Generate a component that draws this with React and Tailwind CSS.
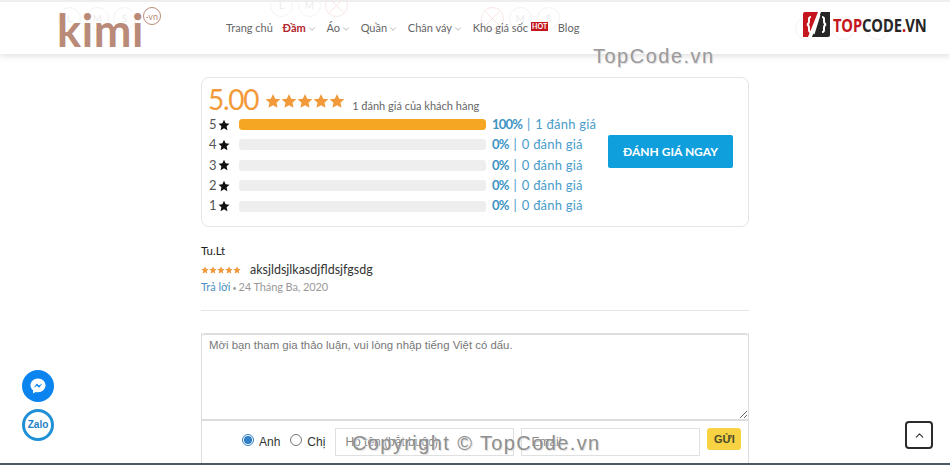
import { ChevronDown, ChevronUp } from 'lucide-react';

const FONT = "font-['Lato','Noto_Sans',sans-serif]";

const menu = [
  { label: 'Trang chủ' },
  { label: 'Đầm', arrow: true, active: true },
  { label: 'Áo', arrow: true },
  { label: 'Quần', arrow: true },
  { label: 'Chân váy', arrow: true },
  { label: 'Kho giá sốc', hot: true },
  { label: 'Blog' },
];

const rows = [
  { star: 5, percent: '100%', count: 1, width: '100%' },
  { star: 4, percent: '0%', count: 0, width: '0%' },
  { star: 3, percent: '0%', count: 0, width: '0%' },
  { star: 2, percent: '0%', count: 0, width: '0%' },
  { star: 1, percent: '0%', count: 0, width: '0%' },
];

const ghosts = [
  { x: 'left-[58px] top-[5px]', t: 'L' },
  { x: 'left-[86px] top-[5px]', t: 'M' },
  { x: 'left-[113px] top-[5px]', t: 'S' },
  { x: 'left-[270px] top-[-8px]', t: 'L' },
  { x: 'left-[298px] top-[-8px]', t: 'M' },
  { x: 'left-[325px] top-[-8px]', t: '', cross: true },
  { x: 'left-[481px] top-[5px]', t: '', cross: true },
  { x: 'left-[509px] top-[5px]', t: 'M' },
  { x: 'left-[537px] top-[5px]', t: 'S' },
  { x: 'left-[795px] top-[15px]', t: '' },
  { x: 'left-[832px] top-[15px]', t: '' },
  { x: 'left-[866px] top-[15px]', t: '' },
];

const Star = ({ className }) => (
  <svg viewBox="0 0 24 24" className={className} fill="currentColor">
    <path d="M12 1.5l3.2 7.1 7.8.8-5.8 5.2 1.6 7.7L12 18.4l-6.8 3.9 1.6-7.7L1 9.4l7.8-.8z" />
  </svg>
);

const Header = () => (
  <header className="relative h-[54px] shrink-0 border-t-2 border-[#eeeeee] bg-white shadow-[0_2px_6px_rgba(0,0,0,0.13)]">
    {ghosts.map((g, i) => (
      <span
        key={i}
        className={`absolute ${g.x} flex h-[23px] w-[23px] items-center justify-center rounded-full border text-[10px] text-[#ececec] ${g.cross ? 'border-[#f8e6e6]' : 'border-[#f3f3f3]'}`}
      >
        {g.t}
        {g.cross && (
          <svg viewBox="0 0 23 23" className="absolute inset-0">
            <path d="M4 4l15 15M19 4L4 19" stroke="#f8e0e0" strokeWidth="1" />
          </svg>
        )}
      </span>
    ))}
    <div className="relative flex h-full items-center pl-[57px]">
      <div className="relative w-[169px]">
        <span className="block h-[50px] pt-[2px] font-['Lato',sans-serif] text-[45px] font-bold leading-[50px] tracking-[0.6px] text-[#b98a78]">kimi</span>
        <span className="absolute left-[86px] top-[4px] flex h-[18px] w-[18px] items-center justify-center rounded-full border border-[#b98a78] text-[9px] leading-none text-[#b98a78]">
          ·vn
        </span>
      </div>
      <nav className="flex items-center gap-[9.700px] pt-[1px] text-[11px] text-[#666666]">
        {menu.map((m) => (
          <span key={m.label} className={`relative flex items-center whitespace-nowrap ${m.active ? 'font-bold text-[#b1252c]' : ''}`}>
            {m.label}
            {m.arrow && <ChevronDown size={10} className="ml-[1px] text-[#aaaaaa]" />}
            {m.hot && (
              <span className="ml-[3px] mb-[5px] bg-[#c4161c] px-[1px] text-[7px] font-bold leading-[9px] text-white">HOT</span>
            )}
          </span>
        ))}
      </nav>
    </div>
    {/* topcode logo */}
    <div className="absolute left-[803px] top-[10px] flex items-center">
      <svg viewBox="0 0 27 25" className="h-[25px] w-[27px]">
        <path d="M2 0h13L5 25H0V2a2 2 0 0 1 2-2z" fill="#c4161c" />
        <path d="M18 0h9v23a2 2 0 0 1-2 2H9z" fill="#262626" />
        <path d="M8 5C5.500 5 6 7 6 9s0 3-2 3.500C6 13 6 14 6 16s-.5 4 2 4" fill="none" stroke="#fff" strokeWidth="2" />
        <path d="M19 5c2.500 0 2 2 2 4s0 3 2 3.500c-2 .5-2 1.500-2 3.500s.5 4-2 4" fill="none" stroke="#fff" strokeWidth="2" />
        <path d="M16.500 3L10.500 22" stroke="#fff" strokeWidth="2" />
      </svg>
      <span className="ml-[3px] origin-left scale-x-[0.82] font-['Noto_Sans',sans-serif] text-[18px] font-bold leading-none text-[#262626]">
        <span className="text-[#c4161c]">TOP</span>CODE<span className="text-[#c4161c]">.</span>VN
      </span>
    </div>
  </header>
);

const RatingBox = () => (
  <section className="flex h-[150px] rounded-lg border border-[#e5e5e5] pl-[7px] pr-[15px]">
    <div className="flex w-[399px] shrink-0 flex-col">
      <div className="flex h-[38px] items-end">
        <span className="-mb-[3px] -ml-[1px] text-[28px] leading-[40px] tracking-[-1.300px] text-[#f29a3a]">5.00</span>
        <span className="mb-[7px] ml-[7px] flex text-[#f29a3a]">
          {[0, 1, 2, 3, 4].map((i) => (
            <Star key={i} className="h-[16px] w-[16px]" />
          ))}
        </span>
        <span className="mb-[3px] ml-[7px] text-[11px] leading-[14px] text-[#666666]">1 đánh giá của khách hàng</span>
      </div>
      <div className="flex flex-col gap-[3.400px]">
        {rows.map((r) => (
          <div key={r.star} className="flex h-[17px] items-center text-[13px] text-[#555555]">
            <span className="w-[9px]">{r.star}</span>
            <Star className="h-[12px] w-[12px] text-[#111111]" />
            <span className="ml-[9px] h-[11px] w-[247px] shrink-0 overflow-hidden rounded-[3px] bg-[#eeeeee]">
              <span className="block h-full rounded-[3px] bg-[#f5a623]" style={{ width: r.width }} />
            </span>
            <span className="ml-[6px] flex whitespace-nowrap text-[13px] text-[#4a9cc9]">
              <b className="font-bold tracking-[-0.800px] text-[#3d94c4]">{r.percent}</b>
              <span className="mx-[5px]">|</span>
              <span className="tracking-[0.200px]">{r.count} đánh giá</span>
            </span>
          </div>
        ))}
      </div>
    </div>
    <div className="flex flex-1 items-start pt-[57px]">
      <button className="h-[33px] w-[125px] rounded-[2px] bg-[#0f9fdc] text-[12px] font-bold text-white">ĐÁNH GIÁ NGAY</button>
    </div>
  </section>
);

const Comment = () => (
  <section className="mt-[17px] h-[67px] border-b border-[#e5e5e5]">
    <div className="text-[11.500px] leading-[14px] text-[#222222]">Tu.Lt</div>
    <div className="mt-[3px] flex h-[18px] items-center">
      <span className="flex text-[#f29a3a]">
        {[0, 1, 2, 3, 4].map((i) => (
          <Star key={i} className="h-[8px] w-[8px]" />
        ))}
      </span>
      <span className="ml-[9px] text-[12.500px] text-[#333333]">aksjldsjlkasdjfldsjfgsdg</span>
    </div>
    <div className="text-[11px] leading-[16px] text-[#999999]">
      <span className="text-[#4a90c2]">Trả lời</span>
      <span className="mx-[2px] text-[7px]">•</span>
      <span className="tracking-[-0.100px]">24 Tháng Ba, 2020</span>
    </div>
  </section>
);

const CommentForm = () => (
  <section className="mt-[22px] border-x border-[#dddddd]">
    <textarea
      readOnly
      placeholder="Mời bạn tham gia thảo luận, vui lòng nhập tiếng Việt có dấu."
      className="block h-[88px] w-full resize-y rounded-t-[3px] border-t-2 border-b-2 border-[#dddddd] px-[7px] py-[2px] font-['Liberation_Sans',sans-serif] text-[11.400px] leading-[16px] outline-none placeholder:text-[#777777]"
    />
    <div className="flex h-[60px] items-start pt-[7px] font-['Liberation_Sans',sans-serif] text-[12px] text-[#333333]">
      <label className="ml-[40px] mt-[1px] flex items-center">
        <span className="flex h-[12px] w-[12px] items-center justify-center rounded-full border border-[#2f80c8] bg-white">
          <span className="h-[8px] w-[8px] rounded-full bg-[#2f80c8]" />
        </span>
        <span className="ml-[5px] mt-[4px]">Anh</span>
      </label>
      <label className="ml-[10px] mt-[1px] flex items-center">
        <span className="h-[12px] w-[12px] rounded-full border border-[#777777] bg-white" />
        <span className="ml-[5px] mt-[4px]">Chị</span>
      </label>
      <input readOnly placeholder="Họ tên (bắt buộc)" className="ml-[10px] h-[28px] w-[179px] border border-[#e0e0e0] px-[9px] text-[12px] outline-none placeholder:text-[#888888]" />
      <input readOnly placeholder="Email" className="ml-[7px] h-[28px] w-[179px] border border-[#e0e0e0] px-[9px] text-[12px] outline-none placeholder:text-[#888888]" />
      <button className="ml-[7px] h-[22px] w-[34px] rounded-[3px] bg-[#f7d344] text-[11px] font-bold text-[#4a4a2a]">GỬI</button>
    </div>
  </section>
);

const Floating = () => (
  <>
    <a className="absolute left-[22px] top-[370px] flex h-[32px] w-[32px] items-center justify-center rounded-full bg-[#0b84f0]">
      <svg viewBox="0 0 24 24" className="h-[20px] w-[20px]">
        <path d="M12 3C6.800 3 3 6.700 3 11.200c0 2.500 1.100 4.500 3 6V21l3.300-1.800c.9.200 1.800.3 2.700.3 5.200 0 9-3.700 9-8.300S17.200 3 12 3z" fill="#fff" />
        <path d="M6.800 14l3.800-5 2.500 2.400L17.200 9l-3.900 5-2.500-2.400z" fill="#0b84f0" />
      </svg>
    </a>
    <a className="absolute left-[22px] top-[409px] flex h-[32px] w-[32px] items-center justify-center rounded-full border-[3px] border-[#1f8fd6] bg-white">
      <span className="font-['Liberation_Sans',sans-serif] text-[10px] font-bold leading-none text-[#1f7fc4]">Zalo</span>
    </a>
    <a className="absolute left-[905px] top-[421px] flex h-[28px] w-[28px] items-center justify-center rounded-[4px] border-2 border-[#2b2b2b] bg-white">
      <ChevronUp size={13} className="text-[#333333]" />
    </a>
    <span className="absolute left-[593px] top-[44px] font-['Liberation_Sans',sans-serif] text-[20px] leading-[24px] tracking-[1.500px] text-[#9a9a9a] [text-shadow:1px_1px_1px_#dddddd]">
      TopCode.vn
    </span>
    <span className="absolute left-[352px] top-[431px] whitespace-nowrap font-['Liberation_Sans',sans-serif] text-[20px] leading-[24px] tracking-[1.400px] text-[#8f8f8f] [text-shadow:1px_1px_1px_#dddddd]">
      Copyright © TopCode.vn
    </span>
  </>
);

const App = () => {
  return (
    <div className={`relative flex h-[465px] w-[950px] flex-col overflow-hidden bg-white ${FONT}`}>
      <Header />
      <main className="mx-auto mt-[23px] w-[548px]">
        <RatingBox />
        <Comment />
        <CommentForm />
      </main>
      <div className="absolute bottom-0 left-0 h-[2px] w-full bg-[#4b5a63]" />
      <Floating />
    </div>
  );
};

export default App;
